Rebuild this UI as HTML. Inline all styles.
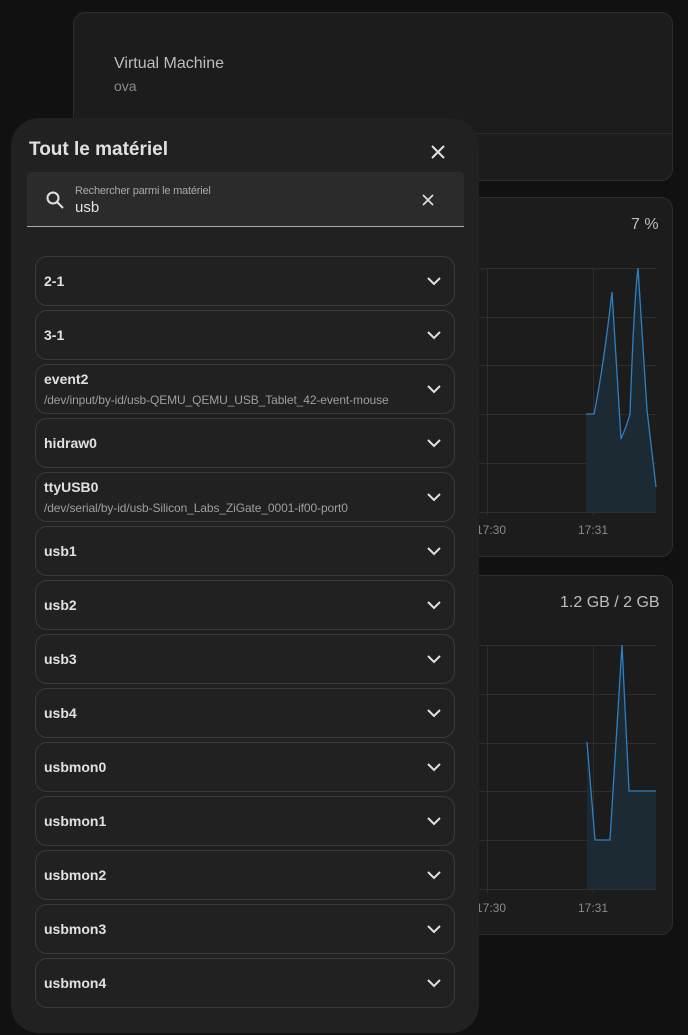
<!DOCTYPE html>
<html style="overflow:hidden;height:1035px"><head><meta charset="utf-8"><style>
*{box-sizing:border-box;margin:0;padding:0}
body{width:688px;height:1035px;background:#111111;font-family:"Liberation Sans",sans-serif;position:relative;overflow:hidden;color:#e1e1e1}
.card{position:absolute;left:73px;width:600px;background:#1c1c1c;border:1px solid #2c2c2c;border-radius:12px}
.dlg{position:absolute;left:11px;top:118px;width:468px;height:915px;background:#212121;border-radius:28px}
.item{position:absolute;left:24px;width:420px;height:50px;border:1px solid #3a3a3a;border-radius:12px}
.item .t{position:absolute;left:8px;top:16px;font-size:14px;font-weight:bold;color:#e1e1e1}
.item.two .t{top:6px}
.item .s{position:absolute;left:8px;top:28px;font-size:12px;color:#9e9e9e;letter-spacing:-0.1px}
.item svg{position:absolute;right:12px;top:16px}
</style></head><body>
<div class="card" style="top:12px;height:169px">
<div style="position:absolute;left:40px;top:42px;font-size:16px;color:#bdbdbd">Virtual Machine</div>
<div style="position:absolute;left:40px;top:65px;font-size:14px;color:#8a8a8a">ova</div>
<div style="position:absolute;left:0;right:0;top:120px;border-top:1px solid #2c2c2c"></div>
</div>
<div class="card" style="top:197px;height:360px"></div>
<div class="card" style="top:575px;height:360px"></div>
<div style="position:absolute;left:631px;top:216px;font-size:16px;color:#bdbdbd">7 %</div>
<div style="position:absolute;left:560px;top:594px;font-size:16px;color:#bdbdbd">1.2 GB / 2 GB</div>
<svg style="position:absolute;left:0;top:0" width="688" height="1035">
<g stroke="#2e2e2e" stroke-width="1">
<line x1="470" y1="268.5" x2="656" y2="268.5"/><line x1="470" y1="317.5" x2="656" y2="317.5"/><line x1="470" y1="365.5" x2="656" y2="365.5"/><line x1="470" y1="414.5" x2="656" y2="414.5"/><line x1="470" y1="463.5" x2="656" y2="463.5"/><line x1="470" y1="512.5" x2="656" y2="512.5"/>
<line x1="487.5" y1="268" x2="487.5" y2="516"/><line x1="593.5" y1="268" x2="593.5" y2="516"/>
<line x1="470" y1="645.5" x2="656" y2="645.5"/><line x1="470" y1="694.5" x2="656" y2="694.5"/><line x1="470" y1="743.5" x2="656" y2="743.5"/><line x1="470" y1="791.5" x2="656" y2="791.5"/><line x1="470" y1="840.5" x2="656" y2="840.5"/><line x1="470" y1="889.5" x2="656" y2="889.5"/>
<line x1="487.5" y1="645" x2="487.5" y2="893"/><line x1="593.5" y1="645" x2="593.5" y2="893"/>
</g>
<path d="M586,414 L594,414 Q603,370 612,292 L621,439 Q627,425 630,414 Q634,300 638,268 Q642,330 647,410 L656,487 L656,512 L586,512Z" fill="#1b2a33"/>
<path d="M586,414 L594,414 Q603,370 612,292 L621,439 Q627,425 630,414 Q634,300 638,268 Q642,330 647,410 L656,487" fill="none" stroke="#2f7fc1" stroke-width="1.3"/>
<path d="M587,742 L595,840 L610,840 L622,645 L629,791 L656,791 L656,889 L587,889Z" fill="#1b2a33"/>
<path d="M587,742 L595,840 L610,840 L622,645 L629,791 L656,791" fill="none" stroke="#2f7fc1" stroke-width="1.3"/>
<g font-size="12" fill="#8a8a8a" font-family="Liberation Sans"><text x="476" y="534">17:30</text><text x="578" y="534">17:31</text><text x="476" y="912">17:30</text><text x="578" y="912">17:31</text></g>
</svg>
<div class="dlg">
<div style="position:absolute;left:18px;top:21px;font-size:19px;font-weight:bold;color:#e1e1e1">Tout le matériel</div>
<svg style="position:absolute;left:419px;top:26px" width="16" height="16"><path d="M2,2L14,14M14,2L2,14" stroke="#e1e1e1" stroke-width="2"/></svg>
<div style="position:absolute;left:16px;top:54px;width:437px;height:55px;background:#2b2b2b;border-bottom:1px solid #aaa;border-radius:4px 4px 0 0">
<svg style="position:absolute;left:18px;top:18px" width="20" height="20"><circle cx="8" cy="8" r="5.5" fill="none" stroke="#e1e1e1" stroke-width="2"/><path d="M12,12L18,18" stroke="#e1e1e1" stroke-width="2"/></svg>
<div style="position:absolute;left:48px;top:13px;font-size:11px;color:#aaa;letter-spacing:-0.2px">Rechercher parmi le matériel</div>
<div style="position:absolute;left:48px;top:27px;font-size:15px;color:#e1e1e1">usb</div>
<svg style="position:absolute;left:395px;top:22px" width="12" height="12"><path d="M1,1L11,11M11,1L1,11" stroke="#e1e1e1" stroke-width="1.6"/></svg>
</div>
</div>
<div style="position:absolute;left:11px;top:0">
<div class="item" style="top:256px"><div class="t">2-1</div><svg width="16" height="16"><path d="M2,5L8,11L14,5" fill="none" stroke="#e1e1e1" stroke-width="2"/></svg></div>
<div class="item" style="top:310px"><div class="t">3-1</div><svg width="16" height="16"><path d="M2,5L8,11L14,5" fill="none" stroke="#e1e1e1" stroke-width="2"/></svg></div>
<div class="item two" style="top:364px"><div class="t">event2</div><div class="s">/dev/input/by-id/usb-QEMU_QEMU_USB_Tablet_42-event-mouse</div><svg width="16" height="16"><path d="M2,5L8,11L14,5" fill="none" stroke="#e1e1e1" stroke-width="2"/></svg></div>
<div class="item" style="top:418px"><div class="t">hidraw0</div><svg width="16" height="16"><path d="M2,5L8,11L14,5" fill="none" stroke="#e1e1e1" stroke-width="2"/></svg></div>
<div class="item two" style="top:472px"><div class="t">ttyUSB0</div><div class="s">/dev/serial/by-id/usb-Silicon_Labs_ZiGate_0001-if00-port0</div><svg width="16" height="16"><path d="M2,5L8,11L14,5" fill="none" stroke="#e1e1e1" stroke-width="2"/></svg></div>
<div class="item" style="top:526px"><div class="t">usb1</div><svg width="16" height="16"><path d="M2,5L8,11L14,5" fill="none" stroke="#e1e1e1" stroke-width="2"/></svg></div>
<div class="item" style="top:580px"><div class="t">usb2</div><svg width="16" height="16"><path d="M2,5L8,11L14,5" fill="none" stroke="#e1e1e1" stroke-width="2"/></svg></div>
<div class="item" style="top:634px"><div class="t">usb3</div><svg width="16" height="16"><path d="M2,5L8,11L14,5" fill="none" stroke="#e1e1e1" stroke-width="2"/></svg></div>
<div class="item" style="top:688px"><div class="t">usb4</div><svg width="16" height="16"><path d="M2,5L8,11L14,5" fill="none" stroke="#e1e1e1" stroke-width="2"/></svg></div>
<div class="item" style="top:742px"><div class="t">usbmon0</div><svg width="16" height="16"><path d="M2,5L8,11L14,5" fill="none" stroke="#e1e1e1" stroke-width="2"/></svg></div>
<div class="item" style="top:796px"><div class="t">usbmon1</div><svg width="16" height="16"><path d="M2,5L8,11L14,5" fill="none" stroke="#e1e1e1" stroke-width="2"/></svg></div>
<div class="item" style="top:850px"><div class="t">usbmon2</div><svg width="16" height="16"><path d="M2,5L8,11L14,5" fill="none" stroke="#e1e1e1" stroke-width="2"/></svg></div>
<div class="item" style="top:904px"><div class="t">usbmon3</div><svg width="16" height="16"><path d="M2,5L8,11L14,5" fill="none" stroke="#e1e1e1" stroke-width="2"/></svg></div>
<div class="item" style="top:958px"><div class="t">usbmon4</div><svg width="16" height="16"><path d="M2,5L8,11L14,5" fill="none" stroke="#e1e1e1" stroke-width="2"/></svg></div>
</div>
</body></html>
